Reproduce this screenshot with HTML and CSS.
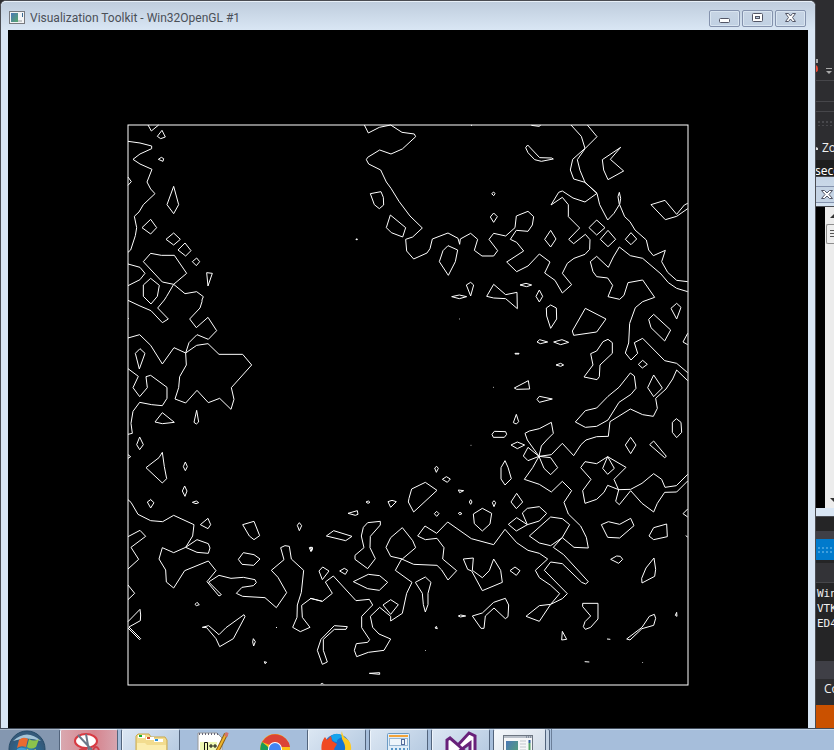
FILE: index.html
```html
<!DOCTYPE html>
<html lang="en">
<head>
<meta charset="utf-8">
<title>Visualization Toolkit - Win32OpenGL #1</title>
<link rel="stylesheet" href="styles.css">
</head>
<body>
<div class="desktop">
  <main class="window">
    <header class="titlebar">
      <svg class="app-icon" width="16" height="14" viewBox="0 0 16 14" aria-hidden="true">
        <defs><linearGradient id="screen" x2="1" y2="1"><stop stop-color="#4a77b8"/><stop offset="1" stop-color="#58a86c"/></linearGradient></defs>
        <rect x=".5" y=".5" width="15" height="12" fill="#f4f5f6" stroke="#77797e"/>
        <rect x="2" y="2" width="7" height="9" fill="url(#screen)"/>
        <path d="M13.5 2v4" stroke="#3b6b94"/><path d="M9 10h4" stroke="#c6c9cc" stroke-width="2"/>
      </svg>
      <h1 class="title">Visualization Toolkit - Win32OpenGL #1</h1>
      <div class="controls">
        <button class="control" type="button" aria-label="Minimize"><svg width="14" height="12" viewBox="0 0 14 12"><rect x="1.500" y="6.500" width="10" height="4" rx="1" fill="#fff" stroke="#535666"/></svg></button>
        <button class="control" type="button" aria-label="Maximize"><svg width="14" height="12" viewBox="0 0 14 12"><rect x="1.500" y="1.500" width="10" height="8" rx="1" fill="#fff" stroke="#535666"/><rect x="4.500" y="4.500" width="4" height="2" fill="#b7c8dc" stroke="#535666"/></svg></button>
        <button class="control" type="button" aria-label="Close"><svg width="14" height="12" viewBox="0 0 14 12"><path d="M1.500 1.500h3l2 2.500 2-2.500h3L8.500 5.500l3 4h-3L6.500 7l-2 2.500h-3l3-4z" fill="#fff" stroke="#535666"/></svg></button>
      </div>
    </header>
    <svg class="viewport" viewBox="8 30 800 698" preserveAspectRatio="xMidYMin slice" role="img" aria-label="Contour lines">
      <rect x="128" y="125" width="560" height="560"/>
      <g transform="translate(120 115) scale(.333333)">
        <path d="M84 30L94 48 116 30M126 46L112 64 122 71 136 66ZM24 79L60 84 95 93 95 101 60 117 39 133 60 147 96 163 81 201 92 222 105 236 70 269 57 291 43 304 50 338 46 362 32 405 24 412M115 133L124 127 131 131 129 139ZM24 186L34 200 24 211M161 214L141 269 161 296 176 269ZM66 338L92 313 110 338 92 357ZM138 373L161 354 181 373 161 390ZM174 405L195 384 213 407 197 423ZM217 440L230 429 239 440 229 452ZM260 473L277 475 264 513Z"/>
        <path d="M70 440L92 415 124 421 163 421 200 475 161 508 127 501ZM24 447L60 457 75 475 60 494 24 512M92 490L70 510 70 544 93 567 112 544 118 511Z"/>
        <path d="M161 508L195 536 230 530 250 545 246 555 246 560 240 579 209 612 229 638 264 607 290 647 265 673 231 659 207 683 197 714M161 508L140 544 133 555 113 579 145 612 127 623 93 587 60 573 24 556"/>
      </g>
      <g transform="translate(120 300) scale(.333333)">
        <path d="M24 114L59 104 92 136 127 192 162 143 197 159 230 136 264 131 297 163 368 163 395 195 334 263 342 298 333 328 299 295 265 308 231 271 197 309 165 297 176 263 179 230 199 195 197 159M60 146L75 160 58 207 46 160ZM24 206L55 229 39 263 59 290 82 263 78 230 92 226 141 262 141 295 127 317 95 314 59 307 39 334 33 370 37 400 24 403M127 338L105 366 127 371 163 367ZM230 331L222 367 229 372 236 366ZM59 411L50 434 59 449 70 434ZM24 464L32 470 24 475M24 54L26 56M92 598L94 600"/>
        <path d="M127 457L117 473 78 503 127 549 140 536 133 500ZM196 486L190 500 196 512 202 500ZM194 558L187 573 195 589 201 573Z"/>
      </g>
      <g transform="translate(120 490) scale(.333333)">
        <path d="M24 29L33 37 54 73 92 92 128 95 161 76 222 104 218 138 197 172 161 188 127 173 117 207 137 240 139 276 161 294 194 242 265 213 288 242 261 275 297 318 304 314 266 276 297 256 333 265 370 262 405 269 409 278 400 287 366 292 349 310 368 319 435 323 469 353 500 308 474 262 454 241 492 209 482 173 495 167 508 169 514 207 551 241 544 307 532 345 531 382 518 412 541 425 570 412 547 382 545 346 573 325 607 334"/>
        <path d="M197 172L231 149 265 161 270 174 265 190 231 187ZM92 29L82 36 92 54 102 38ZM217 37L229 33 236 38 228 41ZM264 85L241 104 264 116 272 104ZM368 104L402 94 419 137 402 149 388 138ZM538 98L532 106 538 122 545 107ZM568 173L578 174 573 185ZM370 188L402 194 420 207 401 226 366 223 355 208ZM24 140L60 121 77 139 33 172 56 208 24 237M24 285L44 310 24 329M24 395L60 358 62 375 61 392 27 411 62 446 59 449 24 414M225 343L231 337 238 344 229 347Z"/>
        <path d="M247 412L266 407 297 434 318 413 372 374 375 380 340 446 299 470 288 446 260 413ZM400 446L406 455 401 468 398 456ZM433 515L440 517 435 521ZM469 411L470 414"/>
      </g>
      <g transform="translate(310 450) scale(.333333)">
        <path d="M0 445L37 454 67 430 46 396 70 378 138 452 178 448 188 465 155 499 155 533 179 569 173 577 139 581 133 601 140 620 175 607 222 601 242 567 207 552 188 532 181 499 209 472 242 499 242 513 277 490 290 430 306 397 256 361 275 327 311 343 381 346 395 360 414 390 440 362 398 327 402 293 381 265 346 269 323 258 345 228 380 250 413 216 484 266 551 284 585 238"/>
        <path d="M0 292L7 292 6 301ZM380 49L374 54 379 67 385 55ZM397 88L409 80 421 87 412 97ZM346 97L381 121 311 186 295 156 297 145 305 117ZM445 120L461 122 449 128ZM168 156L175 153 180 157 174 160ZM234 155L246 151 259 155 242 172ZM114 190L142 182 144 193 136 196ZM482 149L478 156 482 163 486 156ZM552 152L547 158 552 170 557 158ZM380 184L373 191 380 199 387 191ZM445 190L450 187 456 191 449 194ZM517 175L545 190 540 222 517 243 493 221 490 192Z"/>
        <path d="M49 258L71 242 126 259 107 272ZM173 218L211 214 211 225 181 259 180 293 196 326 173 356 135 328 135 316 162 293 154 258 160 232ZM277 233L308 272 317 293 277 327 242 319 228 292 242 263ZM38 351L27 363 37 389 57 363ZM89 363L103 355 113 361 106 373ZM130 395L175 373 209 377 233 397 208 421 173 416ZM242 449L219 465 242 493 265 464ZM316 397L346 381 363 397 354 430 354 464 346 486 340 464 337 430Z"/>
        <path d="M460 327L490 324 487 361 517 383 538 362 551 327 572 361 577 397 517 422 485 363 473 358ZM445 498L452 495 467 498 451 501ZM487 498L517 489 551 457 586 445 596 465 594 500 586 506 552 474 526 498 522 535 513 535ZM379 529L375 534 382 536ZM112 530L73 527 33 568 22 601 37 643 52 636 40 601 40 568 73 538 108 538ZM345 600L347 602M178 670L209 668 209 673ZM32 702L38 700 41 703"/>
      </g>
      <g transform="translate(500 440) scale(.333333)">
        <path d="M15 268L50 308 84 331 118 340 143 357 106 391 118 413 152 436 179 461 152 493 118 544 78 529 118 497 152 493 187 476 202 461 133 391 152 366 187 371 245 427 257 432 265 425 191 344 160 322 187 292 209 254 187 236 152 231 88 288 118 309 152 317 187 293 222 322 265 324 259 292 242 258 205 222 192 187 215 152 187 124 154 156 118 133 73 118 98 83 117 49 154 44 187 10 221 47 243 14 258 0 290-10 325-11 330-55 391-93 428-76 460-71 472-95 467-125 498-153 518-183 530-210 563-178"/>
        <path d="M33 15L52 6 74 15 52 26ZM84 22L70 48 84 62 117 49ZM117 49L152 53 173 83 152 104 132 85ZM117 49L82 0 75-20 88-27 118-34 154-53 160-20 140 0 124 18ZM15 62L3 83 3 117 15 135 34 116 24 82ZM50 160L33 186 49 206 68 186ZM82 254L67 219 82 205 118 200 140 220 118 243ZM82 254L49 273 25 253 50 233Z"/>
        <path d="M323 50L378 82 342 118 356 150 347 184 358 194 392 152 426 190 461 216 472 190 494 157 530 156 563 123M323 50L290 71 255 65 242 83 273 118 248 152 255 190 290 178 312 157 323 136 356 149 392 148 426 130 461 101 485 118 495 142 529 137 563 103M323 50L308 85 323 103 343 85ZM392-8L376 15 392 41 408 15ZM461 3L449 14 494 53 499 49ZM563 207L549 221 563 231"/>
        <path d="M304 254L325 245 359 253 392 235 402 257 359 294 323 292ZM500 252L502 290 461 299 447 288 461 263ZM557 287L563 291M45 381L30 392 49 406 60 392ZM332 358L350 348 361 349 368 358 356 370ZM462 354L467 388 464 409 426 429 425 415 438 384ZM248 490L294 490 294 537 272 562 256 568 250 560 255 545 272 528 248 500ZM463 523L467 535 461 556 426 566 390 600 380 597 426 562 448 529ZM530 517L526 526 531 529ZM187 574L200 598 185 600ZM321 597L331 598M254 665L268 666M427 666L428 668"/>
      </g>
      <g transform="translate(350 115) scale(.333333)">
        <path d="M43 30L55 54 88 37 122 30 156 52 193 57 197 65 157 102 123 117 89 105 53 127 49 134 56 147 92 165 109 201 123 220 147 259 180 303 217 339 188 366 167 373 170 408 191 432 231 414 240 401 247 372 294 354 324 370 329 388 331 372 362 355 383 373 373 406 396 423 431 423 443 407 417 373 431 355 467 363 495 338"/>
        <path d="M61 236L93 230 100 247 101 270 88 281 73 269ZM121 300L167 338 158 366 124 353 109 338ZM294 392L323 405 316 440 295 481 268 440 279 407ZM431 231L425 236 431 242 435 236ZM431 294L421 306 431 322 442 305ZM18 372L22 372 22 374 18 374ZM363 31L366 31M305 545L328 540 350 545 328 551ZM362 502L349 510 362 543 371 510ZM431 508L410 544 431 549 467 551 502 581 501 532 467 539ZM328 612L330 612M429 817L431 817M362 991L364 991"/>
      </g>
      <g transform="translate(500 115) scale(.333333)">
        <path d="M45 338L49 303 84 289 101 305 97 330 84 349 49 346 31 373 50 382 71 408 20 441 50 470 84 453 118 417 150 441 134 474 165 496 187 534 215 509 187 475 202 445 222 430 255 418 269 403 270 374 256 358 221 386 206 373 239 339 205 305 205 269 187 247 153 270 176 232 187 228 219 249 255 261 291 235 255 202 221 192 211 165 218 133 255 100 244 64 213 30"/>
        <path d="M262 30L291 65 255 101 232 134 240 166 255 202 291 235 299 269 323 315 342 295 358 269 354 245 358 232 362 250 359 269 374 305 390 320 405 345 439 375 446 405 460 422 496 406 485 440 503 472 530 496 563 500M563 530L530 520 505 503 483 477 428 430 391 422 358 396 340 426 325 457 290 424 271 440 279 470 290 485 323 489 338 511 324 545 359 553 372 541 384 503 428 495 464 547 428 560 406 578 389 625 386 684 376 714 393 735 413 715 403 683 428 670 494 737 530 745 563 773"/>
        <path d="M94 31L117 34 122 31M83 90L77 98 84 113 104 134 124 139 160 132 155 129 119 128ZM362 97L307 134 311 165 324 194 371 168 331 133ZM563 265L553 270 530 298 495 256 453 269 496 314 530 304 563 281M152 346L134 373 152 396 168 372ZM290 315L267 338 290 360 315 338ZM324 346L301 373 324 395 347 373ZM393 353L376 373 393 389 410 372Z"/>
        <path d="M60 510L78 505 95 510 80 515ZM118 525L108 544 118 561 128 544ZM152 570L139 579 140 603 152 640 170 612 169 579ZM256 580L318 612 290 651 221 661 217 648ZM530 565L513 580 530 612 543 577ZM461 598L446 613 453 638 494 678 512 645ZM563 655L549 681 563 689M111 681L119 674 143 681 121 686ZM161 681L186 674 206 682 182 689ZM45 715L57 715 57 717 45 717ZM168 750L182 745 191 750 182 754Z"/>
        <path d="M324 673L337 683 337 715 300 750 298 785 291 794 252 786 279 750 272 716 290 708 309 680ZM428 736L415 748 427 759 442 748ZM391 774L403 783 408 820 393 838 357 862 324 915 290 934 256 937 226 921 256 887 290 879 324 844 357 817ZM461 780L443 818 461 845 487 819ZM43 819L85 797 89 822 50 823ZM111 853L118 844 157 852 118 862ZM49 898L40 923 49 927 56 920ZM-17 949L17 950 20 958 13 967-20 967-24 958ZM529 911L517 922 517 952 530 968 545 952 543 922Z"/>
      </g>
    </svg>
  </main>

  <aside class="editor">
    <div class="tools">
      <svg width="18" height="20" viewBox="0 0 18 20" aria-hidden="true"><path d="M0 4h2M1 7V5" stroke="#aaa" stroke-width="2"/><path d="M0 9q2 1 2 4t-2 3z" fill="#f04a35"/><path d="M10 12.500h6" stroke="#aaa"/><path d="M10 15h6l-3 3z" fill="#aaa"/></svg>
    </div>
    <div class="rule-row"></div>
    <div class="rule-row short"></div>
    <div class="grip"></div>
    <div class="zoom-row"><svg width="3" height="7" viewBox="0 0 3 7" aria-hidden="true"><path d="M0 3l2 1v2H0z" fill="#ddd"/></svg>Zoom</div>
    <div class="seconds">seconds</div>
    <div class="console-head">
      <button class="console-close" type="button" aria-label="Close console"><svg width="14" height="12" viewBox="0 0 14 12"><path d="M1.500 1.500h3l2.500 2.500 2.500-2.500h3L9 5.500l3.500 4h-3L7 7 4.500 9.500h-3L5 5.500z" fill="#fff" stroke="#535666"/></svg></button>
    </div>
    <div class="console">
      <div class="scrollbar">
        <svg width="9" height="17" viewBox="0 0 9 17" aria-hidden="true"><path d="M5 11l5-5v5z" fill="#333"/></svg>
        <div class="thumb"></div>
        <svg class="down" width="9" height="15" viewBox="0 0 9 15" aria-hidden="true"><path d="M5 5h5v5z" fill="#333"/></svg>
      </div>
    </div>
    <div class="console-foot"></div>
    <div class="gap-dark"></div>
    <div class="gap-light"></div>
    <div class="panel-title"></div>
    <div class="panel-bar"></div>
    <div class="output">Win32<br>VTK<br>ED4</div>
    <div class="gap-light tall"></div>
    <div class="tab">Code</div>
    <div class="status"></div>
  </aside>
</div>

<nav class="taskbar" aria-label="Taskbar">
  <button class="start" type="button" aria-label="Start">
    <svg width="59" height="30" viewBox="0 0 59 30"><defs><radialGradient id="orb" cx=".5" cy=".65"><stop stop-color="#3fa8d2"/><stop offset=".6" stop-color="#286893"/><stop offset="1" stop-color="#345a7b"/></radialGradient></defs><circle cx="27" cy="20" r="18" fill="url(#orb)" stroke="#254b68"/><path d="M13 12q14-13 28 0-14-5-28 0z" fill="#a4c5d8"/><path d="M19 11q4-4 9-1l-2 8q-5-2-9 1z" fill="#e96b31"/><path d="M29 10q5 3 10 0l-3 8q-5 3-9 0z" fill="#8bc34c"/><path d="M17 20q4-3 9 0l-2 8h-9z" fill="#429cd5"/><path d="M27 20q4 3 9 0l-3 8h-8z" fill="#f5cf46"/></svg>
  </button>
  <button class="task red" type="button" aria-label="Snipping Tool">
    <svg width="57" height="30" viewBox="0 0 57 30"><ellipse cx="26" cy="12" rx="11" ry="7" fill="#fff" stroke="#d83a42" stroke-width="2"/><path d="M18 6l14 15M26 5l3 17" stroke="#6c7888" stroke-width="2"/><ellipse cx="36" cy="23" rx="3" ry="5" fill="none" stroke="#cf3e47" stroke-width="2"/><ellipse cx="23" cy="23" rx="4" ry="3" fill="none" stroke="#cf3e47" stroke-width="2"/></svg>
  </button>
  <button class="task" type="button" aria-label="Explorer">
    <svg width="57" height="30" viewBox="0 0 57 30"><path d="M14 30V7l2-2h11l2 3h14l2 3v19z" fill="#f2dc8f" stroke="#c9a94d"/><path d="M16 6h7v3h-7M24 8h8v3h-8M32 10h9v3h-9" fill="#fff"/><path d="M17 6h3v2h-3" fill="#17b02b"/><path d="M25 8h3v2h-3" fill="#d04f32"/><path d="M33 10h3v2h-3" fill="#2a91dc"/><path d="M15 14h8l2 2h19v14H15z" fill="#fbedb0"/></svg>
  </button>
  <button class="task bare" type="button" aria-label="Notepad++">
    <svg width="57" height="30" viewBox="0 0 57 30"><path d="M14 4h19l5 5v21H14z" fill="#fff" stroke="#999"/><path d="M15 5h20" stroke="#667" stroke-width="2" stroke-dasharray="1 2"/><path d="M16 13h17v15H16z" fill="#eef8b4"/><path d="M20.500 24V13.500h3V24M25 17h4M27 15v4M29 17h4M31 15v4" fill="none" stroke="#111"/><path d="M42 5L32 25" stroke="#8c6017" stroke-width="4"/><path d="M42 5L32 25" stroke="#efb62c" stroke-width="2"/><path d="M41 5l3 1" stroke="#d47368" stroke-width="4"/></svg>
  </button>
  <button class="task bare" type="button" aria-label="Chrome">
    <svg width="57" height="30" viewBox="0 0 57 30"><circle cx="29" cy="20" r="15" fill="#fbc116"/><path d="M16 13a15 15 0 0 1 28 5H29z" fill="#db4437"/><path d="M16 13a15 15 0 0 0 8 21l5-8-8-9z" fill="#189b58"/><circle cx="29" cy="20" r="7" fill="#fff"/><circle cx="29" cy="20" r="6" fill="#4285f4"/></svg>
  </button>
  <button class="task" type="button" aria-label="Firefox">
    <svg width="57" height="30" viewBox="0 0 57 30"><circle cx="29" cy="18" r="13" fill="#1673d4"/><path d="M23 7q7-5 12 1-7 2-6 5-5 0-6-6z" fill="#15a4ed"/><path d="M14 24Q12 14 17 8l2 3 4-4 1 5 5 3-3 5 2 4z" fill="#f04922"/><path d="M34 2q0 5 5 8 5 4 4 11-3 6-9 6 5-7 2-13-4-7-2-12z" fill="#ffcb22"/></svg>
  </button>
  <button class="task" type="button" aria-label="Calculator">
    <svg width="57" height="30" viewBox="0 0 57 30"><rect x="17.500" y="4.500" width="22" height="28" rx="1" fill="#e0edf8" stroke="#6b9bc5"/><path d="M19 7h19" stroke="#f3a43b" stroke-width="2"/><rect x="19.500" y="9.500" width="18" height="7" fill="#eef5fb" stroke="#97b6d3"/><rect x="31.500" y="10.500" width="3" height="5" fill="none" stroke="#536b9c"/><path d="M21 20h17" stroke="#5696c8" stroke-width="2" stroke-dasharray="2 2"/></svg>
  </button>
  <button class="task" type="button" aria-label="Visual Studio">
    <svg width="57" height="30" viewBox="0 0 57 30"><path d="M15 28V11l3-2 8 7L37 4l6 3v21M26 16l12 11V14L21 27" fill="#fff" stroke="#68217a" stroke-width="3"/></svg>
  </button>
  <button class="task stacked" type="button" aria-label="Visualization Toolkit">
    <svg width="51" height="30" viewBox="0 0 51 30"><rect x="9.500" y="6.500" width="29" height="25" fill="#f6f7f8" stroke="#6d7681"/><path d="M10 8h28" stroke="#b9c0c9" stroke-width="2"/><path d="M32 8h6" stroke="#536174" stroke-dasharray="1 1"/><path d="M12 12h12v18H12z" fill="url(#screen)"/><path d="M26 12h6M26 15h6M26 18h6M26 21h6" stroke="#c1c6cc"/><path d="M35.500 11v3" stroke="#2b5fa1" stroke-width="2"/><path d="M35.500 14v14" stroke="#56a568" stroke-width="2"/></svg>
  </button>
  <span class="divider"></span>
</nav>
</body>
</html>
```
FILE: styles.css
```css
* { box-sizing: border-box; }

body {
  margin: 0;
  height: 100vh;
  display: flex;
  flex-direction: column;
  overflow: hidden;
  background: #2d2d30;
  font-family: "Open Sans", "Noto Sans", sans-serif;
  font-size: 12px;
}

button { font: inherit; padding: 0; }
svg { display: block; flex: none; }

.desktop {
  flex: 1;
  min-height: 0;
  display: grid;
  grid-template-columns: minmax(0, 1fr) 18px;
}

.window {
  display: flex;
  flex-direction: column;
  min-height: 0;
  padding: 0 7px;
  border: 1px solid #4a4c52;
  border-bottom: 0;
  border-radius: 6px 6px 0 0;
  background: #d9e6f4;
}

.titlebar {
  flex: none;
  display: flex;
  align-items: center;
  height: 29px;
  margin: 0 -7px;
  padding: 4px 9px 0 8px;
  border-top: 1px solid #e8f0f8;
  border-radius: 5px 5px 0 0;
  background: linear-gradient(#bfcddd, #d9e6f4);
}

.title {
  flex: 1;
  margin: 0 0 0 5px;
  color: #4b5058;
  font-family: Roboto, "Noto Sans", sans-serif;
  font-size: 12px;
  font-weight: 400;
  line-height: 16px;
}

.controls { display: flex; gap: 2px; }

.control {
  display: grid;
  place-items: center;
  width: 31px;
  height: 17px;
  border: 1px solid #8492ad;
  border-radius: 2px;
  background: linear-gradient(#c7d4e4, #c1d1e3);
  box-shadow: inset 0 0 0 1px #d9e5f1;
}

.viewport {
  flex: 1;
  width: 100%;
  min-height: 0;
  background: #000;
  fill: none;
  stroke: #fff;
  stroke-width: 1;
}

.viewport path { vector-effect: non-scaling-stroke; }

.editor {
  display: flex;
  flex-direction: column;
  min-height: 0;
  overflow: hidden;
  background: #2d2d30;
  color: #f1f1f1;
  white-space: nowrap;
}

.editor > * { flex: none; }

.tools { height: 81px; padding-top: 56px; border-bottom: 1px solid #46464a; }
.rule-row { height: 21px; border-bottom: 1px solid #46464a; }
.rule-row.short { height: 10px; }

.grip {
  height: 6px;
  margin: 8px 0 0 1px;
  background: radial-gradient(circle, #48484c 1px, transparent 1px) 0 0 / 4px 4px;
}

.zoom-row {
  display: flex;
  align-items: center;
  gap: 3px;
  height: 34px;
  padding-top: 8px;
}

.seconds {
  height: 16px;
  background: #1e1e1e;
  color: #fff;
  font-family: "Noto Sans", sans-serif;
  line-height: 22px;
  text-indent: -1px;
  overflow: hidden;
}

.console-head {
  height: 31px;
  padding-top: 9px;
  border-top: 1px solid #4a4c52;
  border-bottom: 1px solid #4a4c52;
  background: linear-gradient(#c5d4e5, #d4e2f0);
}

.console-close {
  display: grid;
  place-items: center start;
  width: 100%;
  height: 17px;
  padding-left: 4px;
  border: 1px solid #8492ad;
  border-width: 1px 0;
  background: #c4d3e4;
}

.editor > .console {
  flex: 1;
  min-height: 0;
  display: flex;
  justify-content: flex-end;
  background: #000;
}

.scrollbar {
  display: flex;
  flex-direction: column;
  width: 9px;
  background: #ececec;
}

.thumb {
  height: 20px;
  margin-left: 1px;
  border: 1px solid #8e8e8e;
  border-right: 0;
  border-radius: 2px 0 0 2px;
  background: repeating-linear-gradient(#555 0 1px, #eee 1px 3px) 3px 5px / 5px 9px no-repeat #eee;
}

.down { margin-top: auto; }
.console-foot { height: 9px; border-bottom: 1px solid #4a4c52; background: #d9e6f4; }
.gap-dark { height: 14px; background: #252526; }
.gap-light { height: 8px; background: #3f3f46; }
.gap-light.tall { height: 18px; }

.panel-title {
  height: 21px;
  border: solid #007acc;
  border-width: 7px 0 7px 1px;
  background: radial-gradient(circle, #3f9fdd 1px, transparent 1px) 0 0 / 4px 4px #007acc;
}

.panel-bar {
  height: 23px;
  border-top: 3px solid #252526;
  border-bottom: 1px solid #46464a;
  background: #333337;
}

.output {
  height: 78px;
  padding: 3px 0 0 1px;
  background: #252526;
  font-family: "DejaVu Sans Mono", monospace;
  font-size: 11px;
  line-height: 15px;
}

.tab { height: 26px; padding: 1px 0 0 8px; line-height: 18px; }
.status { height: 23px; background: #ca5100; }

.taskbar {
  flex: none;
  display: flex;
  gap: 3px;
  height: 22px;
  overflow: hidden;
  border-top: 1px solid #414c5b;
  background: linear-gradient(#c3d6ea 0 1px, #a6bedb 1px);
}

.start {
  width: 59px;
  height: 30px;
  margin-right: -3px;
  border: 0;
  background: linear-gradient(#a9b8ca 0 1px, #8497b0 1px);
}

.task {
  width: 59px;
  height: 30px;
  border: 1px solid #52647c;
  border-top-color: #e9f1fa;
  border-radius: 2px;
  background: linear-gradient(135deg, #dce7f3, #b3c8e0);
  box-shadow: inset 1px 0 0 #eef5fc;
}

.task svg { margin-top: -1px; }
.task.red { background: linear-gradient(90deg, #d9a9b0, #d6848e 60%, #d7a5af); }
.task.bare { border-color: transparent; background: none; box-shadow: none; }
.task.stacked { width: 53px; background: linear-gradient(135deg, #f5f8fb, #cfdae6); box-shadow: 3px 0 0 #c3d2e3, 4px 0 0 #52647c; }
.divider { width: 1px; margin-left: 2px; background: #6b7f99; }
```
